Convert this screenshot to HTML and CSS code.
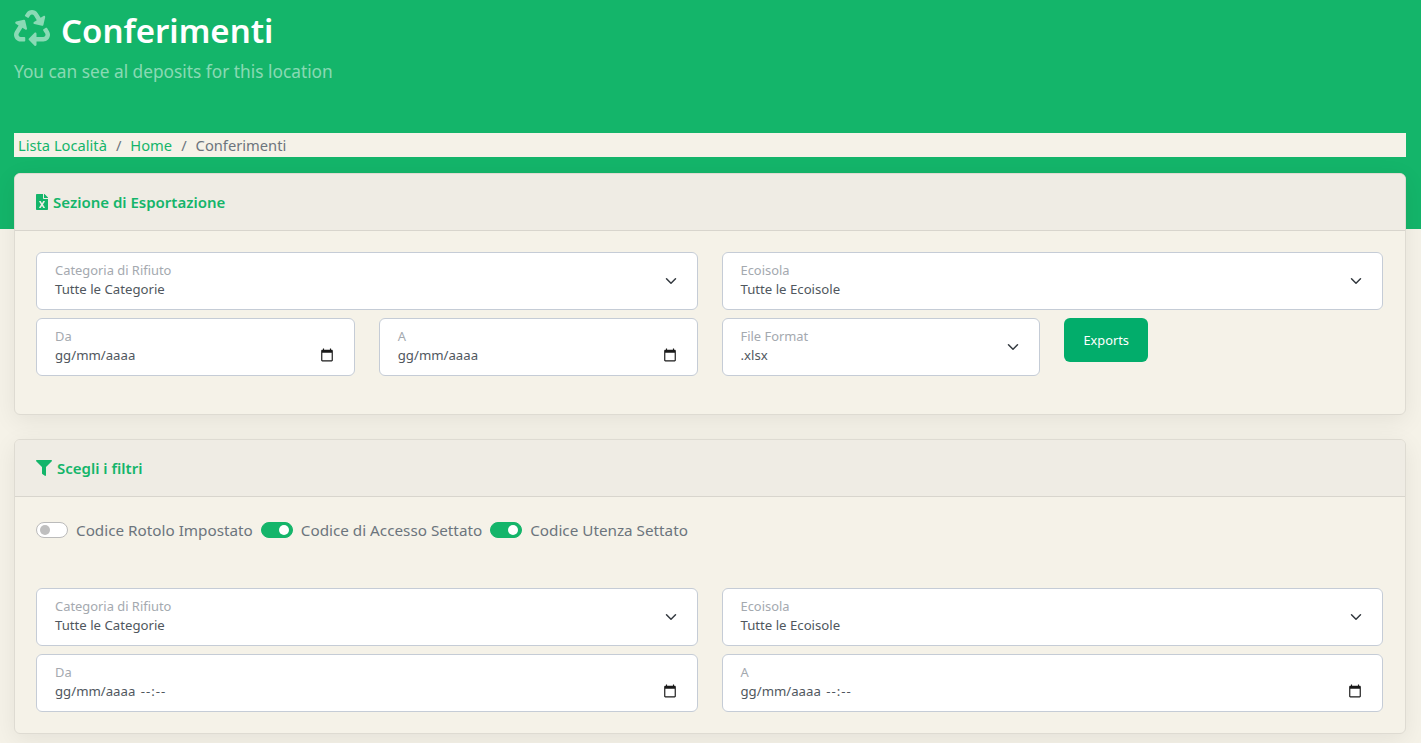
FILE: index.html
```html
<!DOCTYPE html>
<html lang="it">
<head>
    <meta charset="UTF-8">
    <meta name="viewport" content="width=device-width, initial-scale=1.0">
    <title>Conferimenti</title>

    <link rel="stylesheet" href="styles.css">
</head>
<body>

<!-- SVG symbols used more than once -->
<svg class="sprite" aria-hidden="true">
    <symbol id="chevron" viewBox="0 0 16 16">
        <path fill="none" stroke="#343a40" stroke-linecap="round" stroke-linejoin="round" stroke-width="2" d="M2 5l6 6 6-6"/>
    </symbol>
    <symbol id="calendar" viewBox="0 0 24 24">
        <path d="M20 3h-1V1h-2v2H7V1H5v2H4c-1.1 0-2 .9-2 2v16c0 1.1.9 2 2 2h16c1.1 0 2-.9 2-2V5c0-1.1-.9-2-2-2zm0 18H4V8h16v13z"/>
    </symbol>
</svg>

<header class="hero">
    <h1 class="hero-title">
        <svg class="hero-icon" viewBox="0 0 512 512"><path d="M184.561 261.903c3.232 13.997-12.123 24.635-24.068 17.168l-40.736-25.455-50.867 81.402C55.606 356.273 70.96 384 96.012 384H148c6.627 0 12 5.373 12 12v40c0 6.627-5.373 12-12 12H96.115c-75.334 0-121.302-83.048-81.408-146.88l50.822-81.388-40.725-25.448c-12.081-7.547-8.966-25.961 4.879-29.158l110.237-25.45c8.611-1.988 17.201 3.381 19.189 11.99l25.452 110.237zm98.561-182.915l41.289 66.076-40.74 25.457c-12.051 7.528-9 25.953 4.879 29.158l110.237 25.45c8.672 1.999 17.215-3.438 19.189-11.99l25.45-110.237c3.197-13.844-11.99-24.719-24.068-17.168l-40.687 25.424-41.263-66.082c-37.521-60.033-125.209-60.171-162.816 0l-17.963 28.766c-3.51 5.62-1.8 13.021 3.82 16.533l33.919 21.195c5.62 3.512 13.024 1.803 16.536-3.817l17.961-28.743c12.712-20.341 41.973-19.676 54.257-.022zM497.288 301.12l-27.515-44.065c-3.511-5.623-10.916-7.334-16.538-3.821l-33.861 21.159c-5.62 3.512-7.33 10.915-3.818 16.536l27.564 44.112c13.257 21.211-2.057 48.96-27.136 48.96H320V336.02c0-14.213-17.242-21.383-27.313-11.313l-80 79.981c-6.249 6.248-6.249 16.379 0 22.627l80 79.989C302.689 517.308 320 510.3 320 495.989V448h95.88c75.274 0 121.335-82.997 81.408-146.88z"/></svg>
        <span class="hero-text">Conferimenti</span>
    </h1>
    <p class="hero-sub">You can see al deposits for this location</p>
</header>

<main class="content">
    <nav class="breadcrumb">
        <a href="#">Lista Località</a>
        <span class="sep">/</span>
        <a href="#">Home</a>
        <span class="sep">/</span>
        <span>Conferimenti</span>
    </nav>

    <section class="card card-export">
        <div class="card-header">
            <svg class="head-icon" viewBox="0 0 384 512"><path d="M224 136V0H24C10.7 0 0 10.7 0 24v464c0 13.3 10.7 24 24 24h336c13.3 0 24-10.7 24-24V160H248c-13.2 0-24-10.8-24-24zm60.1 106.5L224 336l60.1 93.5c5.1 8-.6 18.5-10.1 18.5h-34.9c-4.4 0-8.5-2.4-10.6-6.3C208.9 405.5 192 373 192 373c-6.1 14.1-9.5 19.1-36.6 68.8-2.1 3.9-6.1 6.3-10.5 6.3H110c-9.5 0-15.2-10.5-10.1-18.5l60.3-93.5-60.3-93.5c-5.2-8 .6-18.5 10.1-18.5h34.8c4.4 0 8.5 2.4 10.6 6.3 26.1 48.8 20 33.6 36.6 68.5 0 0 6.1-11.7 36.6-68.5 2.1-3.9 6.2-6.3 10.6-6.3H274c9.5-.1 15.2 10.4 10.1 18.4zM384 121.9v6.1H256V0h6.1c6.4 0 12.5 2.5 17 7l97.9 98c4.5 4.5 7 10.6 7 16.9z"/></svg>
            Sezione di Esportazione
        </div>
        <div class="card-body">
            <div class="form-grid">
                <div class="field span-2">
                    <div class="field-text"><span class="field-label">Categoria di Rifiuto</span><span class="field-value">Tutte le Categorie</span></div>
                    <svg class="chevron"><use href="#chevron"/></svg>
                </div>
                <div class="field span-2">
                    <div class="field-text"><span class="field-label">Ecoisola</span><span class="field-value">Tutte le Ecoisole</span></div>
                    <svg class="chevron"><use href="#chevron"/></svg>
                </div>
                <div class="field">
                    <div class="field-text"><span class="field-label">Da</span><span class="field-value">gg/mm/aaaa</span></div>
                    <svg class="calendar"><use href="#calendar"/></svg>
                </div>
                <div class="field">
                    <div class="field-text"><span class="field-label">A</span><span class="field-value">gg/mm/aaaa</span></div>
                    <svg class="calendar"><use href="#calendar"/></svg>
                </div>
                <div class="field">
                    <div class="field-text"><span class="field-label">File Format</span><span class="field-value">.xlsx</span></div>
                    <svg class="chevron"><use href="#chevron"/></svg>
                </div>
                <div><button class="btn-export">Exports</button></div>
            </div>
        </div>
    </section>

    <section class="card card-filters">
        <div class="card-header">
            <svg class="head-icon" viewBox="0 0 512 512"><path d="M487.976 0H24.028C2.71 0-8.047 25.866 7.058 40.971L192 225.941V432c0 7.831 3.821 15.17 10.237 19.662l80 55.98C298.02 518.69 320 507.493 320 487.98V225.941l184.947-184.97C520.021 25.896 509.338 0 487.976 0z"/></svg>
            Scegli i filtri
        </div>
        <div class="card-body">
            <div class="switches">
                <label class="switch-item"><span class="switch"></span>Codice Rotolo Impostato</label>
                <label class="switch-item"><span class="switch on"></span>Codice di Accesso Settato</label>
                <label class="switch-item"><span class="switch on"></span>Codice Utenza Settato</label>
            </div>
            <div class="form-grid">
                <div class="field span-2">
                    <div class="field-text"><span class="field-label">Categoria di Rifiuto</span><span class="field-value">Tutte le Categorie</span></div>
                    <svg class="chevron"><use href="#chevron"/></svg>
                </div>
                <div class="field span-2">
                    <div class="field-text"><span class="field-label">Ecoisola</span><span class="field-value">Tutte le Ecoisole</span></div>
                    <svg class="chevron"><use href="#chevron"/></svg>
                </div>
                <div class="field span-2">
                    <div class="field-text"><span class="field-label">Da</span><span class="field-value">gg/mm/aaaa <span class="time">--:--</span></span></div>
                    <svg class="calendar"><use href="#calendar"/></svg>
                </div>
                <div class="field span-2">
                    <div class="field-text"><span class="field-label">A</span><span class="field-value">gg/mm/aaaa <span class="time">--:--</span></span></div>
                    <svg class="calendar"><use href="#calendar"/></svg>
                </div>
            </div>
        </div>
    </section>
</main>

</body>
</html>
```

FILE: styles.css
```css
body {
    font-family: "Noto Sans", "Open Sans", sans-serif;
    background-color: #f5f2e8;
    color: #6c757d;
    margin: 0;
    padding: 0;
    height: 743px;
    overflow: hidden;
}

.sprite {
    display: none;
}

.hero {
    background-color: #14b56a;
    height: 229px;
    padding: 0 14px;
    box-sizing: border-box;
}

.hero-title {
    display: flex;
    align-items: center;
    gap: 11px;
    margin: 0;
    padding-top: 10px;
    height: 36px;
    color: #fff;
    font-size: 33px;
    font-weight: 600;
    line-height: 36px;
}

.hero-text {
    margin-top: 5px;
}

.hero-icon {
    width: 36px;
    height: 36px;
    fill: rgba(255, 255, 255, 0.5);
}

.hero-sub {
    margin: 14px 0 0;
    color: rgba(255, 255, 255, 0.5);
    font-size: 17.3px;
    line-height: 24px;
}

.content {
    margin: -96px 15px 0 14px;
}

.breadcrumb {
    display: flex;
    gap: 9px;
    height: 24px;
    padding-left: 4px;
    background-color: #f5f2e8;
    font-size: 14.7px;
    line-height: 24px;
    color: #6c757d;
}

.breadcrumb a {
    color: #14b56a;
    text-decoration: none;
}

.card {
    background-color: #f5f2e8;
    border: 1px solid #dedbd2;
    border-radius: 6px;
    box-shadow: 0 6px 24px rgba(0, 0, 0, 0.07);
    overflow: hidden;
    box-sizing: border-box;
}

.card-export {
    margin-top: 16px;
    height: 242px;
}

.card-filters {
    margin-top: 24px;
    height: 295px;
}

.card-header {
    display: flex;
    align-items: center;
    gap: 5px;
    height: 56px;
    padding-left: 21px;
    background-color: #efece4;
    border-bottom: 1px solid #d8d5cd;
    color: #14b56a;
    font-size: 15px;
    font-weight: 600;
}

.head-icon {
    height: 16px;
    fill: #14b56a;
    flex: none;
}

.card-body {
    padding: 21px 22px 0 21px;
}

.form-grid {
    display: grid;
    grid-template-columns: repeat(4, 1fr);
    gap: 8px 24px;
}

.span-2 {
    grid-column: span 2;
}

.field {
    display: flex;
    align-items: center;
    justify-content: space-between;
    height: 58px;
    padding: 0 18px;
    background-color: #fff;
    border: 1px solid #c5ccd6;
    border-radius: 6px;
    box-sizing: border-box;
}

.field-text {
    display: flex;
    flex-direction: column;
    margin-top: -3px;
}

.field-label {
    color: #a4a9af;
    font-size: 12.9px;
    line-height: 19px;
}

.field-value {
    color: #50575e;
    font-size: 13.2px;
    line-height: 19px;
}

.time {
    letter-spacing: 1px;
    margin-left: 2px;
}

.chevron {
    width: 12px;
    height: 12px;
    margin-right: 2px;
}

.calendar {
    width: 14px;
    height: 14px;
    margin-top: 15px;
    margin-right: 2px;
    fill: #1a1a1a;
}

.btn-export {
    width: 84px;
    height: 44px;
    background-color: #02ad6b;
    color: #fff;
    border: none;
    border-radius: 6px;
    cursor: pointer;
    font-family: inherit;
    font-size: 12.8px;
}

.switches {
    display: flex;
    gap: 8px;
    height: 36px;
    margin-bottom: 34px;
    align-items: flex-start;
    padding-top: 0;
}

.switch-item {
    display: flex;
    align-items: center;
    gap: 8px;
    font-size: 15.25px;
    line-height: 24px;
    color: #6c757d;
}

.switch {
    position: relative;
    width: 32px;
    height: 16px;
    border: 1px solid #bbb;
    border-radius: 8px;
    background-color: #fff;
    box-sizing: border-box;
}

.switch::after {
    content: "";
    position: absolute;
    top: 2px;
    left: 3px;
    width: 10px;
    height: 10px;
    border-radius: 50%;
    background-color: #bfbfbf;
}

.switch.on {
    background-color: #14b56a;
    border-color: #14b56a;
}

.switch.on::after {
    left: auto;
    right: 3px;
    background-color: #fff;
}
```
